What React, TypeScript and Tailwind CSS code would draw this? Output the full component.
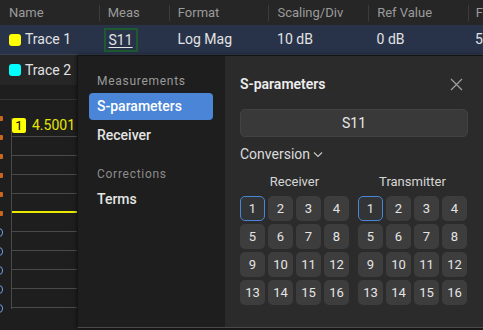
import React from "react";

const font = { fontFamily: "Roboto, 'Noto Sans', sans-serif" };

function Grid({ title }: { title: string }) {
  const nums = Array.from({ length: 16 }, (_, i) => i + 1);
  return (
    <div className="flex flex-col items-center w-[109px]">
      <div className="text-[13px] text-[#d6d6d6] leading-[16px] mb-[6px]">{title}</div>
      <div className="grid grid-cols-4 gap-[3px]">
        {nums.map((n) => (
          <div
            key={n}
            className={
              "w-[25px] h-[25px] rounded-[5px] flex items-center justify-center text-[13px] text-[#e4e4e4] bg-[#3d3d3d] " +
              (n === 1 ? "border border-[#4a86d8] bg-[#333436]" : "")
            }
          >
            {n}
          </div>
        ))}
      </div>
    </div>
  );
}

export default function App() {
  const gridLines = Array.from({ length: 10 }, (_, i) => i);
  const ticks = Array.from({ length: 11 }, (_, i) => i);
  return (
    <div className="relative w-[483px] h-[330px] overflow-hidden bg-[#1e1e1e]" style={font}>
      {/* header */}
      <div className="flex h-[25px] bg-[#262626] text-[13px] text-[#9b9b9b] items-center">
        <div className="w-[100px] pl-[9px]">Name</div>
        <div className="w-px h-[16px] bg-[#3c3c3c]" />
        <div className="w-[70px] pl-[8px]">Meas</div>
        <div className="w-px h-[16px] bg-[#3c3c3c]" />
        <div className="w-[100px] pl-[8px]">Format</div>
        <div className="w-px h-[16px] bg-[#3c3c3c]" />
        <div className="w-[100px] pl-[8px]">Scaling/Div</div>
        <div className="w-px h-[16px] bg-[#3c3c3c]" />
        <div className="w-[100px] pl-[8px]">Ref Value</div>
        <div className="w-px h-[16px] bg-[#3c3c3c]" />
        <div className="pl-[7px]">F</div>
      </div>
      {/* row 1 */}
      <div className="flex h-[30px] bg-[#28334a] border-b border-[#3a4150] text-[14px] text-[#e2e2e2] items-center">
        <div className="w-[101px] pl-[9px] flex items-center gap-[4px]">
          <span className="w-[12px] h-[12px] rounded-[3px] bg-[#ffff00]" />
          Trace 1
        </div>
        <div className="w-[71px] pl-[4px]">
          <span className="inline-block border-2 border-[#1d5a2f] px-[3px] leading-[20px] underline underline-offset-2">
            S11
          </span>
        </div>
        <div className="w-[101px] pl-[8px]">Log Mag</div>
        <div className="w-[101px] pl-[8px]">10 dB</div>
        <div className="w-[100px] pl-[8px]">0 dB</div>
        <div className="pl-[8px]">5</div>
      </div>
      {/* row 2 */}
      <div className="flex h-[30px] bg-[#262626] text-[14px] text-[#e2e2e2] items-center">
        <div className="pl-[9px] flex items-center gap-[4px]">
          <span className="w-[12px] h-[12px] rounded-[3px] bg-[#00ffff]" />
          Trace 2
        </div>
      </div>
      {/* chart area */}
      <div className="mt-[14px] border-t border-[#353535] h-[240px] relative">
        <div className="flex pt-[18px]">
          <div className="w-[11px] flex flex-col">
            {ticks.map((i) => (
              <div key={i} className="h-[19px] flex items-start">
                {i < 6 ? (
                  <span className="w-[3px] h-[5px] -mt-[2px] bg-[#c8661e] rounded-r-[1px]" />
                ) : (
                  <span className="w-[8px] h-[9px] -mt-[4px] -ml-[5px] rounded-full border-[1.5px] border-[#6d9ee0]" />
                )}
              </div>
            ))}
          </div>
          <div className="relative flex-1 border-l border-[#4a4a4a] h-[191px]">
            {gridLines.map((i) => (
              <div
                key={i}
                className={
                  "h-[19px] border-b " + (i === 4 ? "border-b-2 border-[#e8e800] h-[19px]" : "border-[#4a4a4a]")
                }
              />
            ))}
            <div className="absolute left-0 top-0 flex items-center gap-[6px]">
              <span className="w-[14px] h-[15px] bg-[#ffff00] text-black text-[13px] leading-[15px] text-center rounded-[2px]">
                1
              </span>
              <span className="text-[14px] text-[#e6e600] leading-[15px]">4.5001 d</span>
            </div>
          </div>
        </div>
      </div>

      {/* popup */}
      <div className="absolute left-[77px] top-[55px] w-[406px] h-[273px] flex border-l border-t border-[#141414] border-b border-b-[#4a4a4a] shadow-[0_0_4px_rgba(0,0,0,0.6)]">
        <div className="w-[147px] bg-[#1e1e1e] flex flex-col pl-[11px] pr-[12px] pt-[17px]">
          <div className="pl-[8px] text-[12px] tracking-[0.06em] text-[#9a9a9a] leading-[16px]">Measurements</div>
          <div className="mt-[4px] h-[27px] rounded-[4px] bg-[#4a85d8] text-white text-[14px] font-medium flex items-center pl-[8px]">
            S-parameters
          </div>
          <div className="mt-[7px] pl-[8px] text-[14px] font-medium text-[#e4e4e4] leading-[16px]">Receiver</div>
          <div className="mt-[23px] pl-[8px] text-[12px] tracking-[0.06em] text-[#8c8c8c] leading-[16px]">Corrections</div>
          <div className="mt-[9px] pl-[8px] text-[14px] font-medium text-[#e4e4e4] leading-[16px]">Terms</div>
        </div>
        <div className="flex-1 bg-[#2b2b2b] pl-[15px] pr-[15px] pt-[20px]">
          <div className="flex items-center justify-between h-[16px]">
            <span className="text-[14px] font-semibold text-[#ededed]">S-parameters</span>
            <svg width="13" height="13" viewBox="0 0 13 13" className="mr-[5px]">
              <path d="M1 1 L12 12 M12 1 L1 12" stroke="#a0a0a0" strokeWidth="1.2" fill="none" />
            </svg>
          </div>
          <div className="mt-[17px] h-[28px] rounded-[5px] bg-[#393939] border border-[#424242] flex items-center justify-center text-[14px] text-[#e8e8e8]">
            S11
          </div>
          <div className="mt-[9px] flex items-center gap-[3px] text-[14px] text-[#dcdcdc] h-[16px]">
            Conversion
            <svg width="10" height="7" viewBox="0 0 10 7">
              <path d="M1 1.5 L5 5.5 L9 1.5" stroke="#c8c8c8" strokeWidth="1.1" fill="none" />
            </svg>
          </div>
          <div className="mt-[12px] flex gap-[9px]">
            <Grid title="Receiver" />
            <Grid title="Transmitter" />
          </div>
        </div>
      </div>
    </div>
  );
}
